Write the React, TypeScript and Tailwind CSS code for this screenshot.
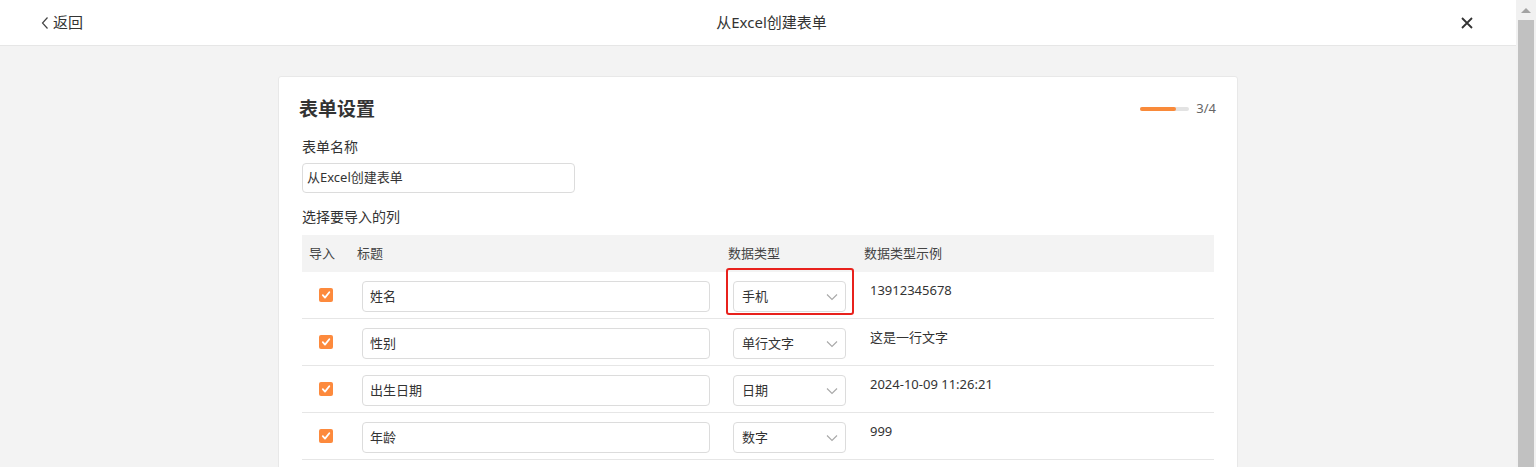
import React from "react";

interface Field {
  title: string;
  type: string;
  example: string;
}

const fields: Field[] = [
  { title: "姓名", type: "手机", example: "13912345678" },
  { title: "性别", type: "单行文字", example: "这是一行文字" },
  { title: "出生日期", type: "日期", example: "2024-10-09 11:26:21" },
  { title: "年龄", type: "数字", example: "999" },
];

const CheckBox = () => (
  <span className="flex h-[14px] w-[14px] items-center justify-center rounded-[2px] bg-[#fd8a3d]">
    <svg width="10" height="10" viewBox="0 0 10 10" fill="none">
      <path d="M1.8 5.2 L4 7.6 L8.3 2.2" stroke="white" strokeWidth="1.8" strokeLinecap="round" strokeLinejoin="round" />
    </svg>
  </span>
);

const Chevron = () => (
  <svg width="12" height="8" viewBox="0 0 12 8" fill="none">
    <path d="M1 1.5 L6 6.5 L11 1.5" stroke="#a8a8a8" strokeWidth="1.1" />
  </svg>
);

const App = () => {
  return (
    <div className="flex h-[467px] w-full overflow-hidden font-['Noto_Sans','Noto_Sans_CJK_SC',sans-serif] text-[#333]">
      <div className="flex-1 overflow-hidden bg-[#f3f3f3]">
        {/* Header */}
        <div className="flex h-[46px] items-center border-b border-[#e6e6e6] bg-white pl-[41px] pr-[42px]">
          <button className="flex items-center gap-[4px] text-[15px] text-[#333]">
            <svg width="8" height="14" viewBox="0 0 8 14" fill="none">
              <path d="M6.5 1.5 L1.5 7 L6.5 12.5" stroke="#444" strokeWidth="1.2" />
            </svg>
            返回
          </button>
          <div className="flex-1 text-center text-[15px] text-[#333]">从Excel创建表单</div>
          <button className="flex h-[14px] w-[14px] items-center justify-center">
            <svg width="12" height="12" viewBox="0 0 12 12" fill="none">
              <path d="M1 1 L11 11 M11 1 L1 11" stroke="#333" strokeWidth="1.8" />
            </svg>
          </button>
        </div>

        {/* Card */}
        <div className="mx-auto mt-[30px] w-[960px] rounded-[3px] border border-[#e8e8e8] bg-white pb-[24px] pl-[20px] pr-[21px] pt-[19px]">
          <div className="flex items-center justify-between">
            <h1 className="text-[19px] font-bold leading-[26px] text-[#333]">表单设置</h1>
            <div className="flex items-center gap-[7px]">
              <div className="h-[4px] w-[49px] rounded-full bg-[#e3e3e3]">
                <div className="h-[4px] w-[36px] rounded-full bg-[#f98a3a]" />
              </div>
              <span className="text-[13px] text-[#666]">3/4</span>
            </div>
          </div>

          <div className="pl-[3px]">
            <div className="mt-[15px] text-[14px] leading-[20px]">表单名称</div>
            <div className="mt-[6px] flex h-[30px] w-[273px] items-center rounded-[4px] border border-[#dcdcdc] px-[4px] text-[13px]">
              从Excel创建表单
            </div>

            <div className="mt-[14px] text-[14px] leading-[20px]">选择要导入的列</div>

            {/* Table */}
            <div className="mt-[8px] w-[912px]">
              <div className="flex h-[37px] items-center bg-[#f3f3f3] text-[13px] text-[#444]">
                <div className="w-[55px] pl-[7px]">导入</div>
                <div className="w-[371px]">标题</div>
                <div className="w-[136px]">数据类型</div>
                <div className="flex-1">数据类型示例</div>
              </div>

              {fields.map((f, i) => (
                <div key={f.title} className="flex h-[47px] border-b border-[#e6e6e6]">
                  <div className="flex w-[55px] items-center pl-[17px]">
                    <CheckBox />
                  </div>
                  <div className="w-[371px] pl-[5px] pt-[9px]">
                    <div className="flex h-[31px] w-[348px] items-center rounded-[4px] border border-[#dcdcdc] px-[7px] text-[13px]">
                      {f.title}
                    </div>
                  </div>
                  <div className="relative w-[136px] pl-[5px] pt-[9px]">
                    <div className="flex h-[31px] w-[113px] items-center justify-between rounded-[4px] border border-[#dcdcdc] pl-[8px] pr-[7px] text-[13px]">
                      <span>{f.type}</span>
                      <Chevron />
                    </div>
                    {i === 0 && (
                      <div className="absolute left-[-2px] top-[-4px] h-[47px] w-[128px] rounded-[3px] border-2 border-[#e8211c]" />
                    )}
                  </div>
                  <div className="flex-1 pl-[6px] pt-[8px] text-[13px] leading-[20px]">{f.example}</div>
                </div>
              ))}
              <div className="h-[47px]" />
            </div>
          </div>
        </div>
      </div>

      {/* Scrollbar */}
      <div className="flex w-[20px] flex-col items-center bg-[#f1f1f1]">
        <div className="mt-[8px] h-0 w-0 border-x-[5px] border-b-[5px] border-x-transparent border-b-[#a3a3a3]" />
        <div className="mt-[7px] w-[16px] flex-1 bg-[#c1c1c1]" />
      </div>
    </div>
  );
};

export default App;
